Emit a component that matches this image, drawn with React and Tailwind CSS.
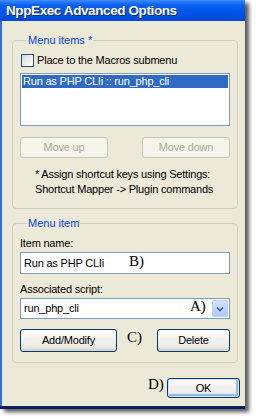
import React from 'react';

const ui = { fontFamily: '"Liberation Sans", Arial, sans-serif' };
const serif = { fontFamily: '"Liberation Serif", "Times New Roman", serif' };

function XpButton({ children, className = '', disabled = false, focused = false }) {
    return (
        <div
            className={
                'flex items-center justify-center rounded-[3px] border text-[11px] tracking-[-0.2px] ' +
                (disabled
                    ? 'border-[#C9C7BA] bg-[#F5F4EA] text-[#ACA899] '
                    : 'border-[#003C74] bg-[linear-gradient(to_bottom,#FFFFFF_0%,#F3F2EE_40%,#ECEBE6_80%,#D6D0C5_100%)] text-black ') +
                (focused ? 'shadow-[inset_0_0_0_1px_#CEE7FF,inset_-1px_-1px_0_2px_#94B7F0] ' : '') +
                className
            }
        >
            {children}
        </div>
    );
}

function Group({ title, children, className = '' }) {
    return (
        <fieldset className={'rounded-[4px] border border-[#D0D0BF] px-[7px] ' + className}>
            <legend className="ml-[7px] px-[1px] text-[11px] leading-[13px] text-[#0046D5]">{title}</legend>
            {children}
        </fieldset>
    );
}

export default function App() {
    return (
        <div className="relative h-[419px] w-[256px] overflow-hidden bg-white" style={ui}>
            <div className="flex h-[409px] w-[245px] flex-col border-b-[3px] border-b-[#101d5a] shadow-[4px_3px_4px_rgba(0,0,0,0.65)]">
                <div className="flex h-[21px] items-center bg-[linear-gradient(to_bottom,#3C8CFF_0%,#0A5EF0_25%,#0055E6_60%,#0049D8_100%)] pl-[6px]">
                    <span className="text-[13.5px] font-bold leading-none tracking-[-0.4px] text-white [text-shadow:1px_1px_0_#0A2A8A]">NppExec Advanced Options</span>
                </div>
                <div className="flex flex-1 flex-col border-l-2 border-l-[#2F6BE8] bg-[#ECE9D8] pl-[10px] pr-[5px] pt-[13px]">
                    <Group title="Menu items *" className="w-[226px] pb-[11px]">
                        <div className="mt-[7px] flex h-[13px] items-center">
                            <div className="ml-[1px] h-[13px] w-[13px] border border-[#1C5180] bg-[linear-gradient(135deg,#DCDCD7_0%,#FFFFFF_100%)]" />
                            <span className="ml-[3px] text-[11px] leading-[13px] tracking-[-0.2px] text-black">Place to the Macros submenu</span>
                        </div>
                        <div className="mt-[6px] h-[53px] border border-[#7F9DB9] bg-white p-[1px]">
                            <div className="h-[13px] bg-[#316AC5] pl-[1px] text-[11px] leading-[13px] tracking-[-0.2px] text-white">
                                Run as PHP CLIi :: run_php_cli
                            </div>
                        </div>
                        <div className="mt-[11px] flex justify-between">
                            <XpButton disabled className="h-[21px] w-[88px]">Move up</XpButton>
                            <XpButton disabled className="h-[21px] w-[88px]">Move down</XpButton>
                        </div>
                        <div className="mt-[9px] pl-[15px] text-[11px] leading-[15px] tracking-[-0.2px] text-black">
                            <div>* Assign shortcut keys using Settings:</div>
                            <div>Shortcut Mapper -&gt; Plugin commands</div>
                        </div>
                    </Group>

                    <Group title="Menu item" className="mt-[8px] w-[226px] pb-[10px]">
                        <div className="mt-[7px] text-[11px] leading-[13px] tracking-[-0.2px] text-black">Item name:</div>
                        <div className="mt-[2px] flex h-[22px] items-center border border-[#7F9DB9] bg-white pl-[3px] text-[11px] tracking-[-0.2px] text-black">
                            Run as PHP CLIi
                        </div>
                        <div className="mt-[9px] text-[11px] leading-[13px] tracking-[-0.2px] text-black">Associated script:</div>
                        <div className="mt-[2px] flex h-[21px] items-center justify-between border border-[#7F9DB9] bg-white pl-[3px] pr-[1px] text-[11px] tracking-[-0.2px] text-black">
                            <span>run_php_cli</span>
                            <div className="flex h-[17px] w-[16px] items-center justify-center rounded-[2px] border border-[#B9CEF8] bg-[linear-gradient(to_bottom,#D5E2FD_0%,#C1D3FB_50%,#B2C7F8_100%)]">
                                <svg width="8" height="6" viewBox="0 0 8 6">
                                    <path d="M1 1.5 L4 4.5 L7 1.5" fill="none" stroke="#4D6185" strokeWidth="1.6" />
                                </svg>
                            </div>
                        </div>
                        <div className="mt-[10px] flex justify-between">
                            <XpButton className="h-[23px] w-[97px]">Add/Modify</XpButton>
                            <XpButton className="h-[23px] w-[73px]">Delete</XpButton>
                        </div>
                    </Group>

                    <div className="mt-[15px] flex justify-end">
                        <XpButton focused className="h-[20px] w-[73px]">OK</XpButton>
                    </div>
                </div>
            </div>

            <span className="absolute left-[129px] top-[254px] text-[15px] leading-[15px] text-black" style={serif}>B)</span>
            <span className="absolute left-[190px] top-[299px] text-[15px] leading-[15px] text-black" style={serif}>A)</span>
            <span className="absolute left-[127px] top-[330px] text-[15px] leading-[15px] text-black" style={serif}>C)</span>
            <span className="absolute left-[148px] top-[377px] text-[15px] leading-[15px] text-black" style={serif}>D)</span>
        </div>
    );
}
